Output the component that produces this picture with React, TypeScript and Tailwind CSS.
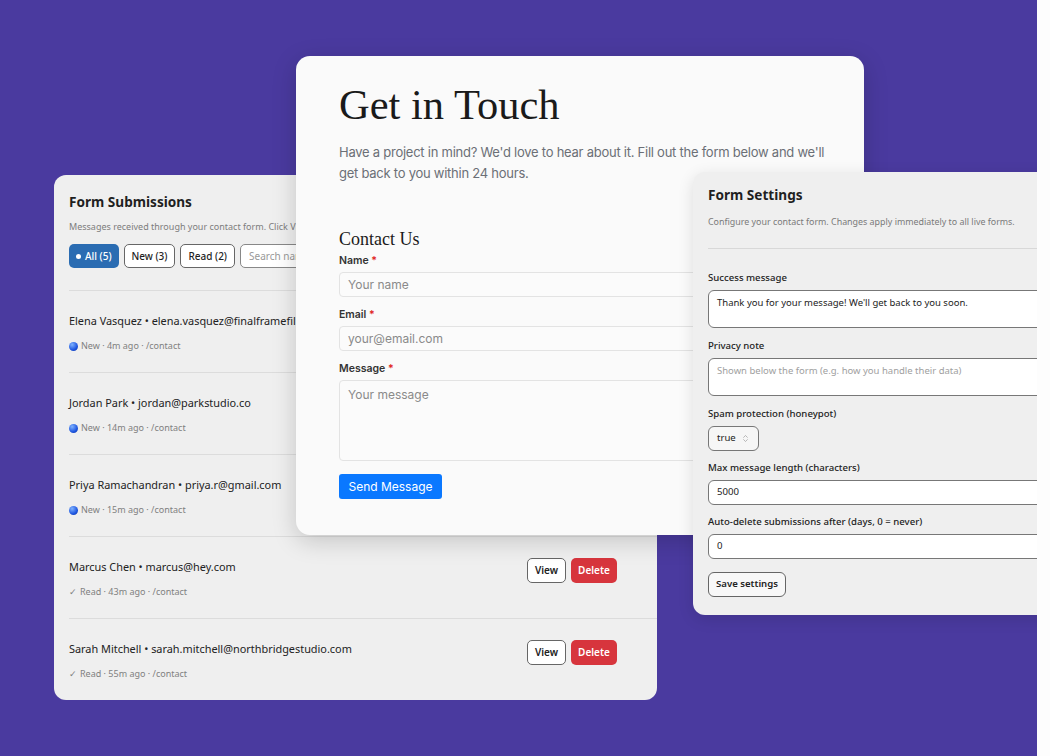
import React from "react";
import { ChevronsUpDown } from "lucide-react";

const subs = [
  { name: "Elena Vasquez", email: "elena.vasquez@finalframefilms.com", status: "New", ago: "4m ago" },
  { name: "Jordan Park", email: "jordan@parkstudio.co", status: "New", ago: "14m ago" },
  { name: "Priya Ramachandran", email: "priya.r@gmail.com", status: "New", ago: "15m ago" },
  { name: "Marcus Chen", email: "marcus@hey.com", status: "Read", ago: "43m ago" },
  { name: "Sarah Mitchell", email: "sarah.mitchell@northbridgestudio.com", status: "Read", ago: "55m ago" },
];

function Dot() {
  return (
    <span className="inline-block w-[9px] h-[9px] rounded-full bg-[radial-gradient(circle_at_35%_30%,#7fb2ff,#1f57e0_60%,#0d2f9c)] mr-[3px]" />
  );
}

function Submissions() {
  return (
    <div className="absolute left-[54px] top-[175px] w-[603px] h-[525px] rounded-[12px] bg-[#efefef] overflow-hidden font-['Noto_Sans',sans-serif] text-[#1f1f1f]">
      <div className="pl-[15px] pt-[16px]">
        <div className="text-[13.6px] font-bold leading-[22px]">Form Submissions</div>
        <div className="mt-[7px] text-[9px] text-[#7d7d7d] leading-[14px] whitespace-nowrap">
          Messages received through your contact form. Click View to read the full message.
        </div>
        <div className="mt-[10px] flex gap-[5px] items-center">
          <button className="h-[24px] px-[7px] rounded-[5px] bg-[#2a6cb2] text-white text-[10px] font-medium flex items-center gap-[4px]">
            <span className="w-[5px] h-[5px] rounded-full bg-white" />All (5)
          </button>
          <button className="h-[24px] px-[7px] rounded-[5px] bg-white border border-[#666] text-[10px] font-medium">New (3)</button>
          <button className="h-[24px] px-[7px] rounded-[5px] bg-white border border-[#666] text-[10px] font-medium">Read (2)</button>
          <div className="h-[24px] w-[200px] px-[8px] rounded-[5px] bg-white border border-[#888] text-[10px] text-[#999] flex items-center">Search name or email…</div>
        </div>
        <div className="mt-[22px] border-t border-[#dcdcdc]">
          {subs.map((s, i) => (
            <div key={i} className={"flex items-start pr-[40px] pt-[21px] h-[82px] " + (i < subs.length - 1 ? "border-b border-[#dcdcdc]" : "")}>
              <div className="flex-1">
                <div className="text-[10.9px] leading-[18px] text-[#222] whitespace-nowrap">
                  {s.name} • {s.email}
                </div>
                <div className="mt-[9px] text-[9px] leading-[14px] text-[#808080] flex items-center">
                  {s.status === "New" ? <Dot /> : <span className="mr-[3px]">✓</span>}
                  {s.status} · {s.ago} · /contact
                </div>
              </div>
              <div className="flex gap-[5px]">
                <button className="h-[25px] w-[39px] rounded-[5px] bg-white border border-[#666] text-[10px] font-semibold text-[#222]">View</button>
                <button className="h-[25px] w-[46px] rounded-[5px] bg-[#d7353d] text-[10px] font-semibold text-white">Delete</button>
              </div>
            </div>
          ))}
        </div>
      </div>
    </div>
  );
}

function Field({ label, children }: { label: string; children: React.ReactNode }) {
  return (
    <div>
      <div className="text-[10.5px] font-semibold text-[#333] leading-[14px]">
        {label} <span className="text-[#e02424]">*</span>
      </div>
      <div className="mt-[4px]">{children}</div>
    </div>
  );
}

function Contact() {
  return (
    <div className="absolute left-[296px] top-[56px] w-[568px] h-[479px] rounded-[14px] bg-[#fafafa] shadow-[0_6px_24px_rgba(0,0,0,0.18)] font-['Inter',sans-serif] pl-[43px] pr-[30px]">
      <h1 className="mt-[24px] font-['Liberation_Serif',serif] text-[42.5px] leading-[50px] text-[#1a1a1a]">Get in Touch</h1>
      <p className="mt-[12px] text-[13px] leading-[21px] text-[#6b6f76] tracking-[-0.25px]">
        Have a project in mind? We'd love to hear about it. Fill out the form below and we'll get back to you within 24 hours.
      </p>
      <h2 className="mt-[45px] font-['Liberation_Serif',serif] text-[18px] leading-[20px] text-[#1a1a1a]">Contact Us</h2>
      <div className="mt-[5px] flex flex-col gap-[11px] pr-[13px]">
        <Field label="Name">
          <div className="h-[25px] rounded-[4px] border border-[#e3e3e3] bg-[#fbfbfb] px-[8px] flex items-center text-[12px] text-[#8a8a8a]">Your name</div>
        </Field>
        <Field label="Email">
          <div className="h-[25px] rounded-[4px] border border-[#e3e3e3] bg-[#fbfbfb] px-[8px] flex items-center text-[12px] text-[#8a8a8a]">your@email.com</div>
        </Field>
        <Field label="Message">
          <div className="h-[81px] rounded-[4px] border border-[#e3e3e3] bg-[#fbfbfb] px-[8px] pt-[5px] text-[12px] text-[#8a8a8a]">Your message</div>
        </Field>
      </div>
      <button className="mt-[13px] h-[25px] w-[103px] rounded-[3px] bg-[#0a78ff] text-white text-[12px]">Send Message</button>
    </div>
  );
}

function SLabel({ children }: { children: React.ReactNode }) {
  return <div className="text-[9.6px] font-medium text-[#222] leading-[14px]">{children}</div>;
}

function Settings() {
  return (
    <div className="absolute left-[693px] top-[172px] w-[420px] h-[443px] rounded-[12px] bg-[#efefef] shadow-[0_4px_16px_rgba(0,0,0,0.12)] font-['Noto_Sans',sans-serif] px-[15px]">
      <div className="pt-[12px] text-[13.6px] font-bold leading-[22px] text-[#1f1f1f]">Form Settings</div>
      <div className="mt-[9px] text-[8.9px] leading-[14px] text-[#7a7a7a] whitespace-nowrap">
        Configure your contact form. Changes apply immediately to all live forms.
      </div>
      <div className="mt-[19px] border-t border-[#d8d8d8]" />
      <div className="mt-[22px] flex flex-col gap-[11px]">
        <div>
          <SLabel>Success message</SLabel>
          <div className="mt-[5px] h-[38px] rounded-[6px] border border-[#777] bg-white px-[8px] pt-[5px] text-[9.5px] text-[#222] leading-[14px]">
            Thank you for your message! We'll get back to you soon.
          </div>
        </div>
        <div>
          <SLabel>Privacy note</SLabel>
          <div className="mt-[5px] h-[38px] rounded-[6px] border border-[#777] bg-white px-[8px] pt-[5px] text-[9.5px] text-[#a0a0a0] leading-[14px]">
            Shown below the form (e.g. how you handle their data)
          </div>
        </div>
        <div>
          <SLabel>Spam protection (honeypot)</SLabel>
          <div className="mt-[5px] h-[25px] w-[51px] rounded-[6px] border border-[#777] bg-[#f6f6f6] pl-[8px] flex items-center gap-[5px] text-[9.6px] text-[#222]">
            true <ChevronsUpDown size={9} strokeWidth={1.5} className="text-[#888]" />
          </div>
        </div>
        <div className="-mt-[1px]">
          <SLabel>Max message length (characters)</SLabel>
          <div className="mt-[5px] h-[25px] rounded-[6px] border border-[#777] bg-white px-[8px] flex items-center text-[9.6px] text-[#222]">5000</div>
        </div>
        <div className="-mt-[1px]">
          <SLabel>Auto-delete submissions after (days, 0 = never)</SLabel>
          <div className="mt-[5px] h-[25px] rounded-[6px] border border-[#777] bg-white px-[8px] flex items-center text-[9.6px] text-[#222]">0</div>
        </div>
        <div className="-mt-[1px]">
          <button className="h-[25px] px-[7px] rounded-[6px] border border-[#666] bg-[#f8f8f8] text-[9.6px] font-semibold text-[#222]">Save settings</button>
        </div>
      </div>
    </div>
  );
}

export default function App() {
  return (
    <div className="w-[1050px] h-[756px] bg-[#fdfdfd] overflow-hidden">
      <div className="relative w-[1037px] h-[756px] bg-[#4a3a9f] overflow-hidden">
        <Submissions />
        <Contact />
        <Settings />
      </div>
    </div>
  );
}
